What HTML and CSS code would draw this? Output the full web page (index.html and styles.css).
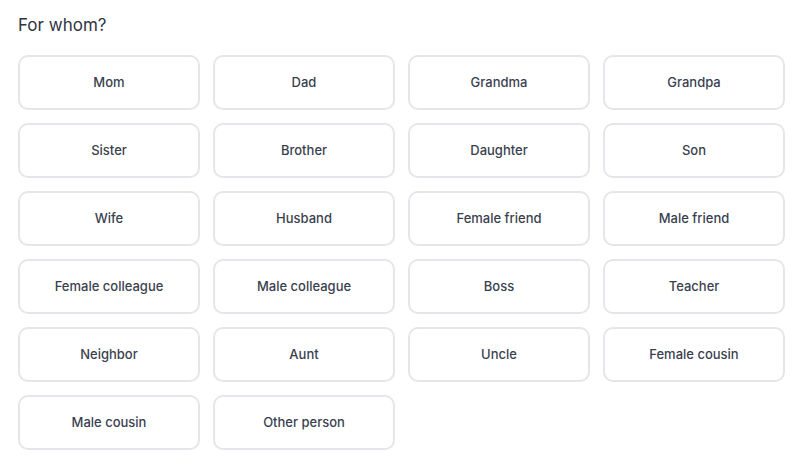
FILE: index.html
```html
<!DOCTYPE html>
<html>
<head>
<meta charset="utf-8">
<link rel="stylesheet" href="styles.css">
</head>
<body>
<div class="page">
  <h2 class="title">For whom?</h2>
  <div class="grid">
    <button class="opt">Mom</button>
    <button class="opt">Dad</button>
    <button class="opt">Grandma</button>
    <button class="opt">Grandpa</button>
    <button class="opt">Sister</button>
    <button class="opt">Brother</button>
    <button class="opt">Daughter</button>
    <button class="opt">Son</button>
    <button class="opt">Wife</button>
    <button class="opt">Husband</button>
    <button class="opt">Female friend</button>
    <button class="opt">Male friend</button>
    <button class="opt">Female colleague</button>
    <button class="opt">Male colleague</button>
    <button class="opt">Boss</button>
    <button class="opt">Teacher</button>
    <button class="opt">Neighbor</button>
    <button class="opt">Aunt</button>
    <button class="opt">Uncle</button>
    <button class="opt">Female cousin</button>
    <button class="opt">Male cousin</button>
    <button class="opt">Other person</button>
  </div>
</div>
</body>
</html>
```
FILE: styles.css
```css
html, body {
  margin: 0;
  padding: 0;
  background: #ffffff;
}
.page {
  padding: 13px 24px 0 18px;
  font-family: "Inter", "Noto Sans", sans-serif;
}
.title {
  margin: 0 0 18px 0;
  font-size: 17px;
  line-height: 24px;
  font-weight: 400;
  color: #2f3444;
}
.grid {
  display: grid;
  grid-template-columns: repeat(4, 182px);
  grid-auto-rows: 55px;
  column-gap: 13px;
  row-gap: 13px;
}
.opt {
  box-sizing: border-box;
  border: 2px solid #e6e6ea;
  border-radius: 10px;
  background: #ffffff;
  font-family: "Inter", "Noto Sans", sans-serif;
  font-size: 13px;
  font-weight: 500;
  line-height: 16px;
  color: #3a3f4f;
  padding: 0 0 2px 0;
  cursor: pointer;
}
```
